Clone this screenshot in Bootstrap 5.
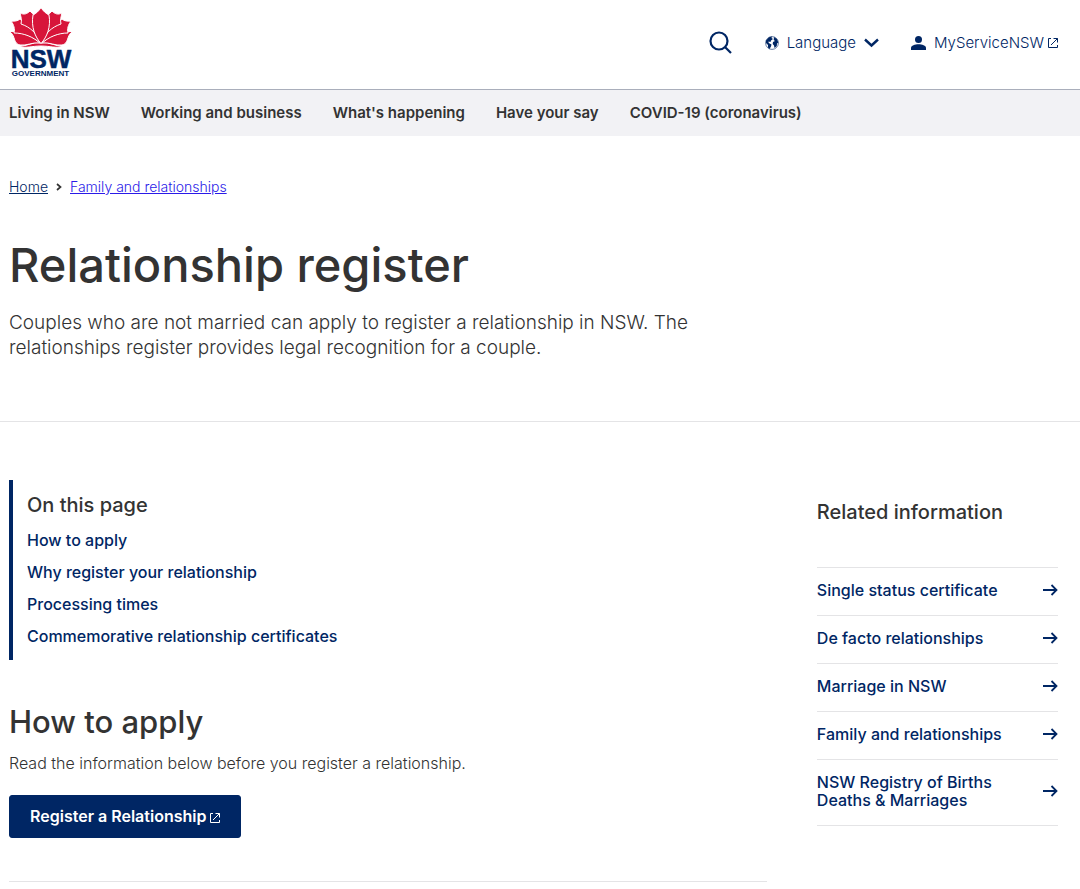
<!DOCTYPE html>
<html lang="en">
<head>
<meta charset="utf-8">
<meta name="viewport" content="width=device-width, initial-scale=1">
<title>Relationship register | NSW Government</title>
<link href="https://cdn.jsdelivr.net/npm/bootstrap@5.3.0/dist/css/bootstrap.min.css" rel="stylesheet">
<style>
:root { --navy: #002664; --ink: #333; --rule: #e4e4e6; }
body { font-family: Inter, "Open Sans", sans-serif; font-size: 16px; line-height: 24px; color: var(--ink); font-weight: 300; }
.page-pad { padding-left: 9px; padding-right: 22px; }
.site-header { min-height: 89px; padding-bottom: 3px; }
.tool-link { color: var(--navy); font-size: 15px; line-height: 24px; }
.site-nav { background: #f2f2f5; border-top: 1px solid #a9aebb; min-height: 47px; padding-bottom: 2px; }
.site-nav a { color: var(--ink); font-weight: 600; font-size: 15px; line-height: 20px; }
.site-nav ul { column-gap: 31px; }
.crumbs { font-size: 14px; line-height: 20px; padding-top: 41px; }
.crumbs .crumb-home { color: var(--navy); }
.crumbs .crumb-parent { color: #2a1ae8; }
.page-title { font-size: 47px; line-height: 56px; font-weight: 500; margin: 40px 0 17px; }
.intro { font-size: 19px; line-height: 25px; max-width: 720px; margin: 0 0 61px; }
.rule { border-bottom: 1px solid var(--rule); }
.content-grid { display: grid; grid-template-columns: 22fr 7fr; column-gap: 50px; padding-top: 58px; }
@media (max-width: 767px) { .content-grid { grid-template-columns: 1fr; row-gap: 32px; } }
.on-page { border-left: 4px solid var(--navy); padding: 12px 14px; }
.small-title { font-size: 20px; line-height: 26px; font-weight: 500; }
.on-page .small-title { margin-bottom: 10px; }
.on-page a, .related a { color: var(--navy); font-weight: 500; font-size: 16px; }
.on-page ul { row-gap: 8px; }
.section-title { font-size: 31px; line-height: 36px; font-weight: 500; margin: 44px 0 11px; }
.btn-navy { --bs-btn-color: #fff; --bs-btn-bg: #002664; --bs-btn-border-color: #002664; --bs-btn-hover-color: #fff; --bs-btn-hover-bg: #1a3b74; --bs-btn-font-weight: 600; --bs-btn-font-size: 16px; --bs-btn-padding-x: 20px; --bs-btn-padding-y: 9px; --bs-btn-border-radius: 3px; --bs-btn-line-height: 23px; margin: 20px 0 43px; }
.related { padding-top: 19px; }
.related ul { margin-top: 42px; border-top: 1px solid var(--rule); }
.related a { line-height: 18px; padding: 13px 0 16px; }
</style>
</head>
<body>
<header class="site-header page-pad d-flex align-items-center justify-content-between">
  <a href="#" aria-label="NSW Government">
    <svg width="64" height="70" viewBox="9 8 64 70" class="d-block">
      <g fill="#d7153a" stroke="#fff" stroke-width="1">
        <path d="M19 46.500C27 46 33 42 41 42S55 46 63 46.500C56 48.500 50 46 41 46S26 48.500 19 46.500Z"/>
        <path id="leaf-low" d="M9 31.500C24 31 33 37 40 43C32 42 27 46 20 45C16 44 15 41 14 38C13 35 12 33 9 31.500Z"/>
        <path id="leaf-out" d="M11 21C14 21.500 18 21 20 19C30 25 37 34 40 43C33 37 24 33 14 33C15 29 14 25 11 21Z"/>
        <path id="leaf-mid" d="M20 13C24 15 27 14 30 11C38 18 41 30 41 43.500C37 33 30 27 21 24C22 20 21 17 20 13Z"/>
        <use href="#leaf-low" transform="translate(82) scale(-1 1)"/>
        <use href="#leaf-out" transform="translate(82) scale(-1 1)"/>
        <use href="#leaf-mid" transform="translate(82) scale(-1 1)"/>
        <path d="M41 7.500C43 11 46 13.500 49 15C51 27 47 37 41 43.500C35 37 31 27 33 15C36 13.500 39 11 41 7.500Z"/>
      </g>
      <g fill="#002664" font-family="Liberation Sans, sans-serif" font-weight="700" text-anchor="middle">
        <text x="41" y="68" font-size="26" stroke="#002664" stroke-width=".5">NSW</text>
        <text x="40.500" y="76" font-size="8">GOVERNMENT</text>
      </g>
    </svg>
  </a>
  <div class="d-flex align-items-center">
    <button type="button" class="btn p-0 border-0 me-4" aria-label="Search">
      <svg width="24" height="24" viewBox="0 0 24 24" class="d-block" fill="none" stroke="#002664" stroke-width="2.200"><circle cx="10" cy="10" r="8.500"/><path d="M16 16l6 6"/></svg>
    </button>
    <button type="button" class="btn tool-link p-0 border-0 d-flex align-items-center ms-2 me-2 fw-light">
      <svg class="me-2" width="14" height="14" viewBox="0 0 14 14"><circle cx="7" cy="7" r="6.400" fill="#fff" stroke="#002664" stroke-width=".6"/><path fill="#002664" d="M4 1.200L7 .6 6.500 2 8 3 6 4.500 5.500 6 3.500 5.500 3.700 7 6.500 8.500 6 10.500 4.500 13 3 11.500 3 9 1 7 1 4.500zM9 1l3 2 1.300 3.500L12 7.500 11.800 10 9.500 12 9 9.500 7.700 8 8 6 10 5 8.700 4z"/></svg>
      Language
      <svg class="ms-2" width="15" height="10" viewBox="0 0 15 10" fill="none" stroke="#002664" stroke-width="2.400"><path d="M1 1.500l6.500 6L14 1.500"/></svg>
    </button>
    <a href="#" class="tool-link text-decoration-none d-flex align-items-center ms-4">
      <svg class="me-2" width="15" height="14" viewBox="0 0 15 14" fill="#002664"><circle cx="7.500" cy="3.500" r="3.500"/><path d="M0 14v-2C0 9.500 4 8.300 7.500 8.300S15 9.500 15 12v2z"/></svg>
      MyServiceNSW
      <svg class="ms-1" width="10" height="10" viewBox="0 0 10 10" fill="none" stroke="#002664"><path d="M3 .5H.5v9h9V7M5.500 .5h4v4M9.500 .5L3 7"/></svg>
    </a>
  </div>
</header>
<nav class="site-nav page-pad d-flex align-items-center" aria-label="Main">
  <ul class="list-unstyled d-flex flex-wrap mb-0">
    <li><a class="text-decoration-none" href="#">Living in NSW</a></li>
    <li><a class="text-decoration-none" href="#">Working and business</a></li>
    <li><a class="text-decoration-none" href="#">What's happening</a></li>
    <li><a class="text-decoration-none" href="#">Have your say</a></li>
    <li><a class="text-decoration-none" href="#">COVID-19 (coronavirus)</a></li>
  </ul>
</nav>
<main>
  <div class="page-pad rule">
    <nav class="crumbs d-flex align-items-center gap-2" aria-label="Breadcrumb">
      <a class="crumb-home" href="#">Home</a>
      <svg width="6" height="8" viewBox="0 0 6 8" fill="none" stroke="#333" stroke-width="1.700"><path d="M1 1l3.500 3L1 7"/></svg>
      <a class="crumb-parent" href="#">Family and relationships</a>
    </nav>
    <h1 class="page-title">Relationship register</h1>
    <p class="intro">Couples who are not married can apply to register a relationship in NSW. The relationships register provides legal recognition for a couple.</p>
  </div>
  <div class="page-pad content-grid">
    <div>
      <nav class="on-page" aria-labelledby="toc">
        <h2 class="small-title" id="toc">On this page</h2>
        <ul class="list-unstyled d-flex flex-column mb-0">
          <li><a class="text-decoration-none" href="#apply">How to apply</a></li>
          <li><a class="text-decoration-none" href="#why">Why register your relationship</a></li>
          <li><a class="text-decoration-none" href="#times">Processing times</a></li>
          <li><a class="text-decoration-none" href="#certs">Commemorative relationship certificates</a></li>
        </ul>
      </nav>
      <section class="rule">
        <h2 class="section-title" id="apply">How to apply</h2>
        <p class="mb-0">Read the information below before you register a relationship.</p>
        <button type="button" class="btn btn-navy">Register a Relationship
          <svg width="10" height="10" viewBox="0 0 10 10" fill="none" stroke="#fff"><path d="M3 .5H.5v9h9V7M5.500 .5h4v4M9.500 .5L3 7"/></svg>
        </button>
      </section>
    </div>
    <aside class="related">
      <h2 class="small-title mb-0">Related information</h2>
      <svg class="d-none"><symbol id="arrow" viewBox="0 0 15 12"><path d="M0 6h13.500M8.500 1l5 5-5 5" fill="none" stroke="#002664" stroke-width="1.800"/></symbol></svg>
      <ul class="list-unstyled mb-0">
        <li class="rule"><a class="text-decoration-none d-flex align-items-center justify-content-between" href="#">Single status certificate<svg class="flex-shrink-0" width="15" height="12"><use href="#arrow"/></svg></a></li>
        <li class="rule"><a class="text-decoration-none d-flex align-items-center justify-content-between" href="#">De facto relationships<svg class="flex-shrink-0" width="15" height="12"><use href="#arrow"/></svg></a></li>
        <li class="rule"><a class="text-decoration-none d-flex align-items-center justify-content-between" href="#">Marriage in NSW<svg class="flex-shrink-0" width="15" height="12"><use href="#arrow"/></svg></a></li>
        <li class="rule"><a class="text-decoration-none d-flex align-items-center justify-content-between" href="#">Family and relationships<svg class="flex-shrink-0" width="15" height="12"><use href="#arrow"/></svg></a></li>
        <li class="rule"><a class="text-decoration-none d-flex align-items-center justify-content-between" href="#"><span>NSW Registry of Births<br>Deaths &amp; Marriages</span><svg class="flex-shrink-0" width="15" height="12"><use href="#arrow"/></svg></a></li>
      </ul>
    </aside>
  </div>
</main>
<script src="https://cdn.jsdelivr.net/npm/bootstrap@5.3.0/dist/js/bootstrap.bundle.min.js"></script>
</body>
</html>
